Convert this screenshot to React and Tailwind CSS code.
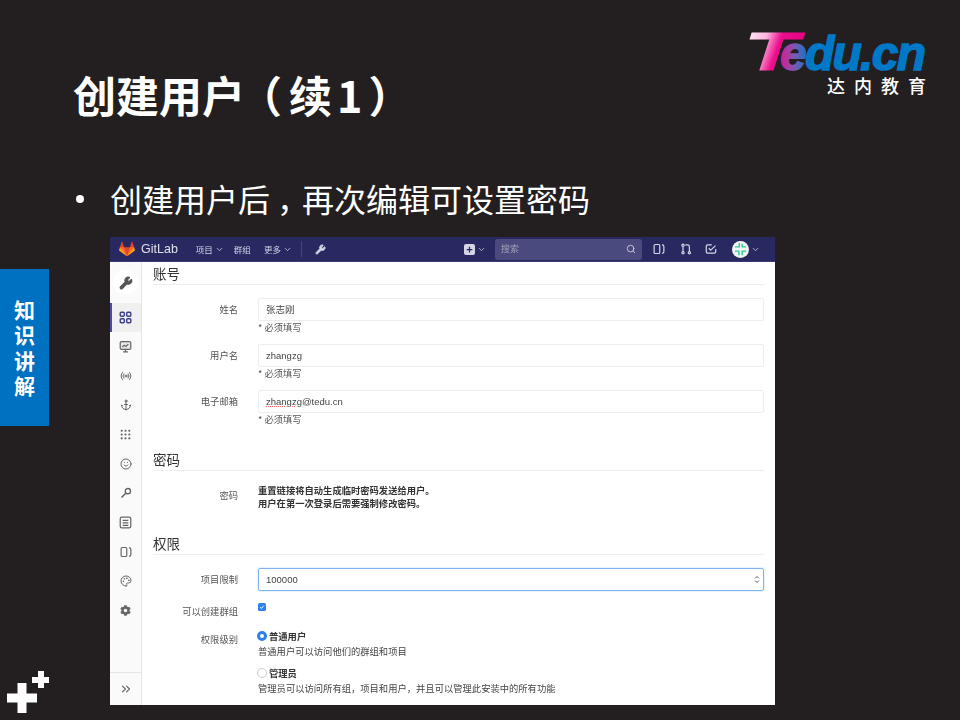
import React from 'react';
import {
  Wrench, Radio, Anchor, Grip, Smile, Palette, ChevronsRight, ChevronDown, Search,
} from 'lucide-react';
import { FaCog } from 'react-icons/fa';

const CJK = 'font-["Noto_Sans_CJK_SC","Liberation_Sans",sans-serif]';

const Tanuki = () => (
  <svg viewBox="0 0 36 36" className="w-[16px] h-[16px]">
    <path fill="#e24329" d="M2 14l9.38 9v-9l-4-12.28c-.205-.632-1.176-.632-1.38 0z" />
    <path fill="#e24329" d="M34 14l-9.38 9v-9l4-12.28c.205-.632 1.176-.632 1.38 0z" />
    <path fill="#e24329" d="M18 34.38L3 14h30z" />
    <path fill="#fc6d26" d="M18 34.38L11.38 14H2l4 11z" />
    <path fill="#fc6d26" d="M18 34.38L24.62 14H34l-4 11z" />
    <path fill="#fca326" d="M2 14L.1 20.16c-.18.565 0 1.2.5 1.56l17.42 12.66z" />
    <path fill="#fca326" d="M34 14l1.9 6.16c.18.565 0 1.2-.5 1.56L18 34.38z" />
  </svg>
);

const Plus = () => (
  <svg viewBox="0 0 50 50" className="w-[50px] h-[50px]" fill="#fff">
    <path d="M17.500 13h9v10.500H37v9H26.500V43h-9V32.500H7v-9h10.500z" />
    <path d="M38 1h6v6h5v6h-5v5h-6v-5h-6V7h6z" />
  </svg>
);

const Boards = ({ className }) => (
  <svg viewBox="0 0 16 16" className={className} fill="none" stroke="currentColor" strokeWidth="1.600">
    <rect x="1.500" y="2" width="7.500" height="12" rx="1.500" />
    <path d="M12 2.200c1.600.3 2.500 1 2.500 2.300v7c0 1.300-.9 2-2.500 2.300" />
  </svg>
);

const MergeRequest = () => (
  <svg viewBox="0 0 16 16" className="w-[12px] h-[12px]" fill="none" stroke="#d5d5e6" strokeWidth="1.600">
    <circle cx="4" cy="3" r="1.500" />
    <circle cx="4" cy="13" r="1.500" />
    <circle cx="12.500" cy="13" r="1.500" />
    <path d="M4 4.500v7M7 2.500h3c1.500 0 2.500 1 2.500 2.500v6.500" />
  </svg>
);

const Todo = () => (
  <svg viewBox="0 0 16 16" className="w-[12px] h-[12px]" fill="none" stroke="#d5d5e6" strokeWidth="1.600">
    <path d="M9 2.500H3.500c-1 0-1.800.8-1.800 1.800v7.400c0 1 .8 1.800 1.800 1.800h9c1 0 1.800-.8 1.800-1.800V8" />
    <path d="M5 7l2.600 2.600L14 3.500" />
  </svg>
);

const Avatar = () => (
  <svg viewBox="0 0 18 18" className="w-[17px] h-[17px]">
    <circle cx="9" cy="9" r="9" fill="#f2f5f3" />
    <path fill="#2fc99a" d="M7 2h1.500v5H3V5.500h4zM10 3h1.500v2.500H15V7h-5zM3 10h5v5H6.500v-3.500H3zM10 10h5v1.500h-3.500V15H10z" />
  </svg>
);

const Monitor = () => (
  <svg viewBox="0 0 16 16" className="w-[13px] h-[13px]" fill="none" stroke="#666" strokeWidth="1.500">
    <rect x="1.500" y="2" width="13" height="9.500" rx="1.500" fill="#e8e8e8" />
    <path d="M4 8.500l2.500-2 2 1.500 3-3M5 14.500h6M8 11.500v3" />
  </svg>
);

const Snippet = () => (
  <svg viewBox="0 0 16 16" className="w-[13px] h-[13px]" fill="none" stroke="#666" strokeWidth="1.500">
    <rect x="1.500" y="1.500" width="13" height="13" rx="2" />
    <path d="M4.500 5.500h7M4.500 8.500h7M4.500 11.500h7" />
  </svg>
);

const KeyIcon = () => (
  <svg viewBox="0 0 16 16" className="w-[12px] h-[12px]" fill="none" stroke="#666" strokeWidth="1.800">
    <circle cx="10.500" cy="5.500" r="3.500" />
    <path d="M8 8L2 14" strokeWidth="2.200" />
  </svg>
);

const sideIcons = [
  <Monitor key="monitor" />,
  <Radio key="radio" size={12} color="#666" />,
  <Anchor key="anchor" size={12} color="#666" />,
  <Grip key="grip" size={13} color="#666" />,
  <Smile key="smile" size={12} color="#666" />,
  <KeyIcon key="key" />,
  <Snippet key="snippet" />,
  <Boards key="boards" className="w-[12px] h-[12px] text-[#666]" />,
  <Palette key="palette" size={12} color="#666" />,
  <FaCog key="settings" size={11} color="#666" />,
];

const Sidebar = () => (
  <div className="w-[32px] shrink-0 bg-[#fafafa] border-r border-[#e5e5e5] flex flex-col">
    <div className="h-[41px] pt-[8px] flex items-start justify-center">
      <div className="w-[25px] h-[25px] rounded-full bg-white flex items-center justify-center">
        <Wrench size={14} color="#555" fill="#555" />
      </div>
    </div>
    <div className="h-[29px] bg-[#f0f0f0] border-l-2 border-[#4b4ba3] flex items-center justify-center pr-[2px]">
      <svg viewBox="0 0 16 16" className="w-[13px] h-[13px]" fill="none" stroke="#3e3e8c" strokeWidth="1.800">
        <rect x="1.500" y="1.500" width="5" height="5" rx="1.300" />
        <rect x="9.500" y="1.500" width="5" height="5" rx="1.300" />
        <rect x="1.500" y="9.500" width="5" height="5" rx="1.300" />
        <rect x="9.500" y="9.500" width="5" height="5" rx="1.300" />
      </svg>
    </div>
    {sideIcons.map((icon, i) => (
      <div key={i} className="h-[29.3px] flex items-center justify-center">{icon}</div>
    ))}
    <div className="mt-auto h-[33px] border-t border-[#e5e5e5] flex items-center justify-center">
      <ChevronsRight size={14} color="#666" />
    </div>
  </div>
);

const NavBar = () => (
  <div className="h-[25px] bg-[#292961] border-b border-[#3a3a78] flex items-center pl-[9px] text-[#d5d5e6] text-[8.500px]">
    <Tanuki />
    <span className="ml-[6px] text-[12.500px] font-['Liberation_Sans',sans-serif] text-[#e0e0ea]">GitLab</span>
    <span className="ml-[18px]">项目</span>
    <ChevronDown size={9} className="ml-[2px]" />
    <span className="ml-[10px]">群组</span>
    <span className="ml-[13px]">更多</span>
    <ChevronDown size={9} className="ml-[2px]" />
    <div className="ml-[9px] w-px h-[16px] bg-[#45457f]" />
    <Wrench size={11} className="ml-[13px]" fill="#d5d5e6" />
    <div className="ml-[138px] w-[11px] h-[11px] rounded-[2px] bg-[#d5d5e6] flex items-center justify-center text-[#292961] text-[11px] font-bold leading-none">+</div>
    <ChevronDown size={9} className="ml-[2px]" />
    <div className="ml-[9px] w-[147px] h-[21px] rounded-[3px] bg-[#4a4a7e] flex items-center justify-between px-[6px] text-[#a0a0b8] text-[9px]">
      <span>搜索</span>
      <Search size={10} color="#d5d5e6" />
    </div>
    <Boards className="ml-[11px] w-[12px] h-[12px]" />
    <div className="ml-[15px]"><MergeRequest /></div>
    <div className="ml-[13px]"><Todo /></div>
    <div className="ml-[15px]"><Avatar /></div>
    <ChevronDown size={9} className="ml-[2px]" />
  </div>
);

const Heading = ({ children }) => (
  <div className="h-[23px] border-b border-[#eeeeee] text-[13.500px] leading-[23px] text-[#333]">{children}</div>
);

const Row = ({ label, className, children }) => (
  <div className={`flex ${className}`}>
    <div className="w-[85px] shrink-0 text-right text-[9.300px] text-[#555]">{label}</div>
    <div className="ml-[20px] flex-1">{children}</div>
  </div>
);

const TextField = ({ value }) => (
  <div>
    <div className="h-[23px] border border-[#eeeeee] rounded-[2px] flex items-center pl-[7px] text-[9.500px] text-[#444] font-['Liberation_Sans','Noto_Sans_CJK_SC',sans-serif]">
      {value}
    </div>
    <div className="h-[12px] text-[9.300px] leading-[12px] text-[#555]">* 必须填写</div>
  </div>
);

const FormPanel = () => (
  <div className="flex-1 pl-[11px] pr-[11px] bg-white">
    <Heading>账号</Heading>
    <Row label="姓名" className="mt-[13px] h-[46px] leading-[23px]"><TextField value="张志刚" /></Row>
    <Row label="用户名" className="h-[46px] leading-[23px]"><TextField value="zhangzg" /></Row>
    <Row label="电子邮箱" className="h-[58px] leading-[23px]">
      <TextField value={<><span className="underline decoration-dotted decoration-red-400">zhangzg</span>@tedu.cn</>} />
    </Row>
    <Heading>密码</Heading>
    <Row label="密码" className="mt-[13px] h-[48px] leading-[23px]">
      <div className="text-[9.300px] leading-[13px] font-bold text-[#333]">
        <p>重置链接将自动生成临时密码发送给用户。</p>
        <p>用户在第一次登录后需要强制修改密码。</p>
      </div>
    </Row>
    <Heading>权限</Heading>
    <Row label="项目限制" className="mt-[13px] h-[34px] leading-[23px]">
      <div className="h-[23px] border border-[#7fb4ee] rounded-[2px] shadow-[0_0_2px_#a8cdf5] flex items-center justify-between pl-[7px] pr-[3px] text-[9.500px] text-[#444] font-['Liberation_Sans',sans-serif]">
        100000
        <svg viewBox="0 0 8 12" className="w-[6px] h-[9px]" fill="none" stroke="#555" strokeWidth="1.300">
          <path d="M1.500 4.500L4 2l2.500 2.500M1.500 7.500L4 10l2.500-2.500" />
        </svg>
      </div>
    </Row>
    <Row label="可以创建群组" className="h-[27px] leading-[18px]">
      <div className="mt-[1px] w-[8px] h-[8px] rounded-[1.500px] bg-[#2f80ed] flex items-center justify-center">
        <svg viewBox="0 0 8 8" className="w-[6px] h-[6px]" fill="none" stroke="#fff" strokeWidth="1.200">
          <path d="M1.500 4.200L3.200 6 6.500 2" />
        </svg>
      </div>
    </Row>
    <Row label="权限级别" className="leading-[20px]">
      <div className="text-[9.300px] text-[#444]">
        <div className="flex items-center h-[13px] font-bold text-[#333]">
          <span className="-ml-[1px] w-[10px] h-[10px] rounded-full border-[3px] border-[#2f80ed] bg-white" />
          <span className="ml-[2px]">普通用户</span>
        </div>
        <div className="h-[24px] leading-[18px]">普通用户可以访问他们的群组和项目</div>
        <div className="flex items-center h-[13px] font-bold text-[#333]">
          <span className="-ml-[1px] w-[10px] h-[10px] rounded-full border border-[#ccc] bg-white" />
          <span className="ml-[2px]">管理员</span>
        </div>
        <div className="leading-[18px]">管理员可以访问所有组，项目和用户，并且可以管理此安装中的所有功能</div>
      </div>
    </Row>
  </div>
);

// logo letters are real text, T is stretched wide like the original mark
const Logo = () => (
  <div className="absolute left-[745px] top-[26px] w-[185px]">
    <svg viewBox="0 0 185 48" className="w-[185px] h-[48px] block font-['Liberation_Sans',sans-serif]">
      <defs>
        <linearGradient id="logoT" x1="0" y1="0" x2="1" y2="0.35">
          <stop offset="0" stopColor="#ffffff" />
          <stop offset="0.4" stopColor="#ffb4de" />
          <stop offset="0.62" stopColor="#ec0e8c" />
          <stop offset="1" stopColor="#e6007e" />
        </linearGradient>
        <linearGradient id="logoE" x1="0" y1="0" x2="1" y2="0">
          <stop offset="0" stopColor="#e0188f" />
          <stop offset="0.1" stopColor="#7a5ab0" />
          <stop offset="0.2" stopColor="#0078c8" />
          <stop offset="1" stopColor="#0078c8" />
        </linearGradient>
      </defs>
      <text x="35" y="44" fontSize="48" fontWeight="700" fontStyle="italic" textLength="146" lengthAdjust="spacing" fill="url(#logoE)" stroke="url(#logoE)" strokeWidth="1.400">edu.cn</text>
      <text transform="translate(-1 44) scale(1.650 1)" fontSize="54" fontWeight="700" fontStyle="italic" fill="url(#logoT)" stroke="url(#logoT)" strokeWidth="0.800">T</text>
    </svg>
    <div className="-mt-[1px] pl-[82px] text-[18px] leading-[24px] font-medium tracking-[9px] text-white whitespace-nowrap">达内教育</div>
  </div>
);

export default function App() {
  return (
    <div className={`relative w-[960px] h-[720px] overflow-hidden bg-[#231f20] ${CJK}`}>
      <Logo />

      {/* left tab */}
      <div className="absolute left-0 top-[269px] w-[49px] h-[157px] bg-[#0070c0] flex items-center justify-center">
        <div className="w-[22px] text-[21px] leading-[25.500px] font-bold text-white text-center">知识讲解</div>
      </div>
      <div className="absolute left-0 top-[670px]"><Plus /></div>

      <div className="pt-[69px] pl-[73px] h-[121px] text-[43px] leading-[50px] font-bold text-white whitespace-nowrap">
        创建用户
        <span className="-ml-[6px] mr-[7px]">（</span>
        续
        <span className="ml-[5px]">1</span>
        <span className="ml-[6px]">）</span>
      </div>

      <div className="mt-[54px] h-[46px] pl-[76px] flex items-center text-[32px] text-white">
        <span className="w-[8px] h-[8px] mt-[2px] rounded-full bg-white mr-[26px]" />
        <span className="whitespace-nowrap">
          创建用户后
          <span className="ml-[7px] -mr-[7px]">，</span>
          再次编辑可设置密码
        </span>
      </div>

      {/* gitlab screenshot */}
      <div className="mt-[16px] ml-[110px] w-[665px] h-[468px] flex flex-col bg-white overflow-hidden blur-[0.3px]">
        <NavBar />
        <div className="flex-1 flex min-h-0">
          <Sidebar />
          <FormPanel />
        </div>
      </div>
    </div>
  );
}
